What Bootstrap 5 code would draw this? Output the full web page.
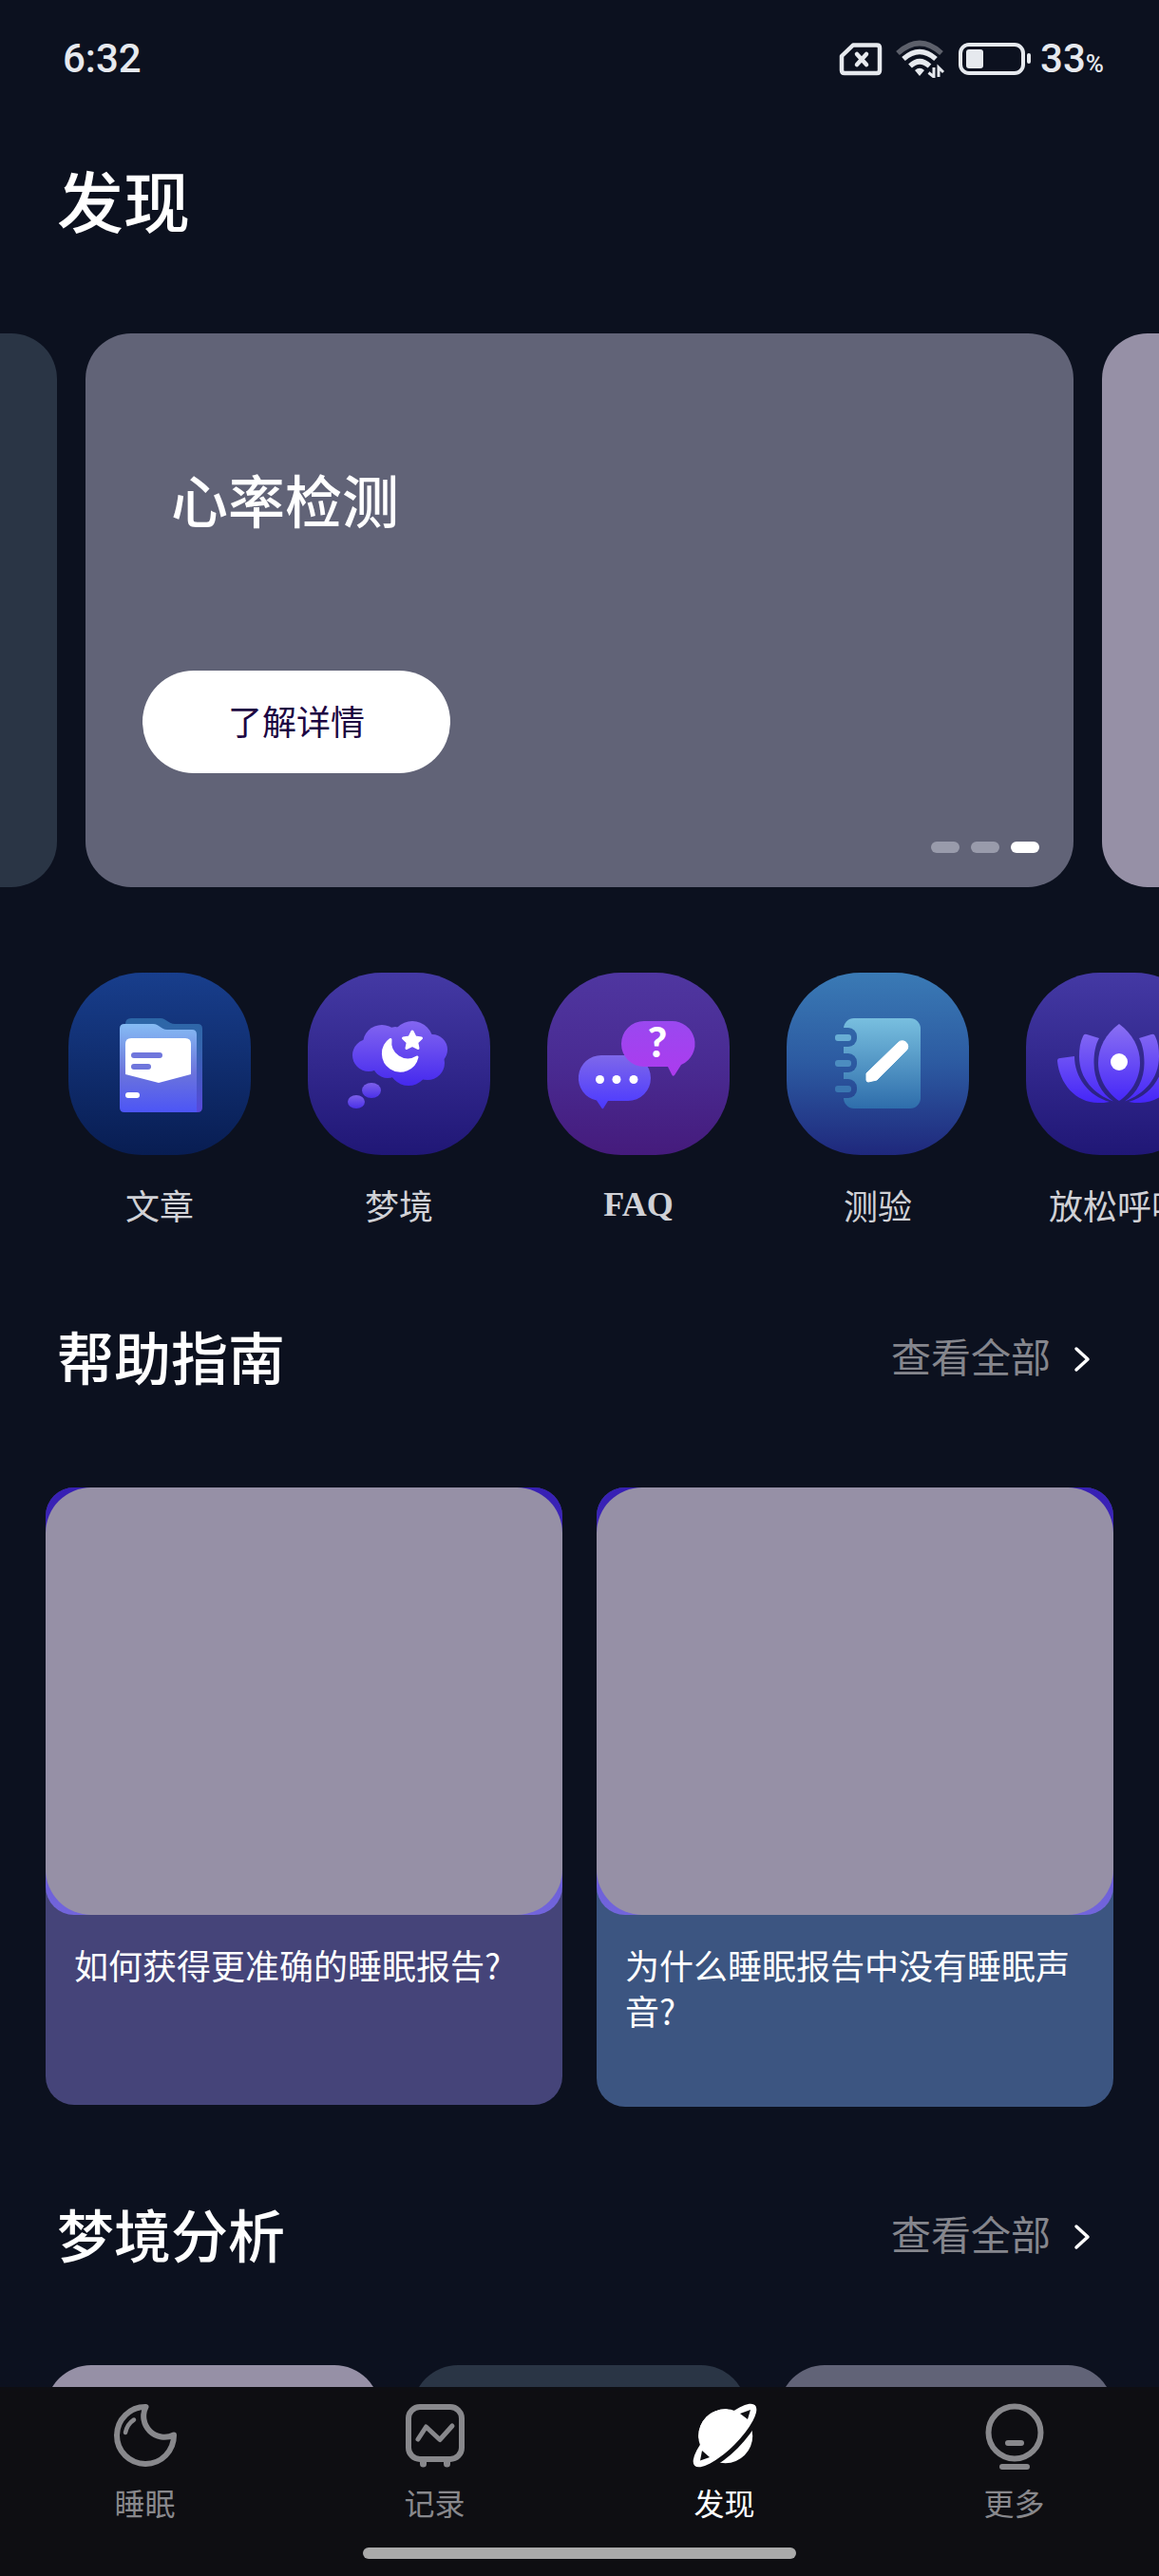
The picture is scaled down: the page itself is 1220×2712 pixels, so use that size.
<!DOCTYPE html>
<html lang="zh-CN" data-bs-theme="dark">
<head>
<meta charset="utf-8">
<meta name="viewport" content="width=device-width, initial-scale=1">
<title>发现</title>
<link href="https://cdn.jsdelivr.net/npm/bootstrap@5.3.0/dist/css/bootstrap.min.css" rel="stylesheet">
<style>
  body { background: #0c111f; color: #fff; font-family: "Noto Sans CJK SC", sans-serif; }
  a { color: inherit; text-decoration: none; }
  svg { display: block; flex: none; }

  .screen-body { scrollbar-width: none; }
  .screen-body::-webkit-scrollbar { display: none; }

  .status-bar { height: 124px; padding: 0 58px 0 66px; color: #e6e9ee; font-family: Roboto, sans-serif; font-weight: 500; }
  .status-time { font-size: 42px; line-height: 48px; }
  .status-icons { gap: 14px; }
  .status-level { font-size: 42px; line-height: 48px; }
  .status-level small { font-size: 26px; line-height: 24px; font-weight: 500; }

  .page-title { font-size: 70px; line-height: 84px; padding: 0 60px; margin: 44px 0 99px; font-weight: 500; }

  .slides { gap: 30px; }
  .slide { width: calc(100% - 180px); height: 583px; border-radius: 48px; }
  .tone-slate { background: #2a3545; }
  .tone-grey { background: #616377; }
  .tone-mauve { background: #9690a6; }
  .slide-current { padding: 132px 36px 36px 60px; }
  .slide-title { font-size: 60px; line-height: 84px; margin-left: 30px; margin-bottom: 139px; font-weight: 500; }
  .slide-btn { width: 324px; height: 108px; padding: 0 0 4px; font-size: 36px; line-height: 48px; --bs-btn-color: #1d0542; --bs-btn-bg: #fff; --bs-btn-border-width: 0; --bs-btn-hover-bg: #eee; --bs-btn-hover-color: #1d0542; }
  .slide-dots { gap: 12px; }
  .slide-dots button { width: 30px; height: 12px; border-radius: 6px; border: 0; padding: 0; background: #999bab; }
  .slide-dots button.active { background: #fff; }

  .topics { gap: 60px; padding: 0 72px 16px; margin-top: 90px; }
  .topic { width: 192px; color: #d0d1d6; font-size: 36px; line-height: 48px; gap: 28px; }
  .topic-tile { border-radius: 78px; }
  .topic-latin { font-family: "Liberation Serif", serif; font-weight: 700; }

  .section-head { padding: 0 72px 0 60px; margin: 91px 0 97px; }
  .topics + section .section-head { margin-top: 77px; }
  .section-head h2 { font-size: 60px; line-height: 84px; font-weight: 500; }
  .section-more { font-size: 42px; line-height: 60px; gap: 24px; color: #85868d; }
  .section-more svg { margin-top: 8px; }

  .guides { gap: 36px; padding: 0 48px; }
  .guide { border-radius: 30px; }
  .guide-cover { border-radius: 30px; background: linear-gradient(#371fb4, #7265dc); }
  .guide-picture { height: 450px; border-radius: 48px; }
  .guide-text { font-size: 36px; line-height: 48px; padding: 28px 30px 78px; min-height: 200px; }
  .guide-violet { background: #454479; }
  .guide-blue { background: #3c5581; }

  .dreams { gap: 34px; padding: 0 48px; }
  .dream { height: 352px; border-radius: 48px; }

  .tab-bar { background: #0e0e12; height: 199px; padding-top: 15px; }
  .tab-link { color: #88888c; font-size: 32px; line-height: 48px; gap: 10px; padding: 0; }
  .tab-link.active { color: #fff; }
  .home-line { width: 456px; height: 12px; border-radius: 6px; background: #aaa; margin-bottom: 18px; }
</style>
<script src="https://cdn.jsdelivr.net/npm/bootstrap@5.3.0/dist/js/bootstrap.bundle.min.js"></script>
</head>
<body class="vh-100 d-flex flex-column overflow-hidden">

<main class="screen-body flex-grow-1 overflow-auto">
  <div class="status-bar d-flex align-items-center justify-content-between">
    <span class="status-time">6:32</span>
    <div class="status-icons d-flex align-items-center">
      <svg width="46" height="38" viewBox="0 0 46 38" fill="none" stroke="#e6e9ee" stroke-width="4.5" stroke-linejoin="round" stroke-linecap="round" aria-hidden="true">
        <path d="M15 4.500H40Q43 4.500 43 7.500V31Q43 34 40 34H6Q3 34 3 31V16Z"/>
        <path d="M19 14L29 25M29 14L19 25"/>
      </svg>
      <svg width="52" height="40" viewBox="0 0 52 40" fill="none" stroke="#e6e9ee" stroke-width="5.500" aria-hidden="true">
        <path d="M2 14Q25 -7 48 14" stroke="#5d606b"/>
        <path d="M8 20Q25 5 42 20"/>
        <path d="M15 27.500Q25 18 35.500 27.500"/>
        <path d="M20 32Q25 27.500 30 32L25 38Z" fill="#e6e9ee" stroke="none"/>
        <path d="M40 29V39L34.500 34.500M45 39V29L50 34" stroke-width="3"/>
      </svg>
      <div class="d-flex align-items-center gap-2">
        <svg width="78" height="36" viewBox="0 0 78 36" aria-hidden="true">
          <rect x="2" y="3" width="66" height="30" rx="9" fill="none" stroke="#e6e9ee" stroke-width="4"/>
          <rect x="8" y="8" width="18" height="20" rx="3" fill="#e6e9ee"/>
          <rect x="72" y="12" width="4" height="11" rx="2" fill="#e6e9ee"/>
        </svg>
        <span class="status-level">33<small>%</small></span>
      </div>
    </div>
  </div>

  <h1 class="page-title">发现</h1>

  <section class="slides d-flex justify-content-center overflow-hidden">
    <div class="slide tone-slate flex-shrink-0"></div>
    <div class="slide slide-current tone-grey flex-shrink-0 d-flex flex-column align-items-start">
      <h2 class="slide-title">心率检测</h2>
      <button type="button" class="slide-btn btn rounded-pill">了解详情</button>
      <div class="slide-dots d-flex mt-auto ms-auto">
        <button type="button" aria-label="1"></button>
        <button type="button" aria-label="2"></button>
        <button type="button" class="active" aria-label="3"></button>
      </div>
    </div>
    <div class="slide tone-mauve flex-shrink-0"></div>
  </section>

  <nav class="topics d-flex overflow-hidden">
    <a href="#" class="topic flex-shrink-0 d-flex flex-column align-items-center">
      <svg class="topic-tile" width="192" height="192" viewBox="0 0 192 192" aria-hidden="true">
        <defs>
          <linearGradient id="tileBlue" x2="0" y2="1"><stop stop-color="#183e8c"/><stop offset="1" stop-color="#081d52"/></linearGradient>
          <linearGradient id="folderBack" x2="0" y2="1"><stop stop-color="#2c66a6"/><stop offset=".3" stop-color="#3566ae"/><stop offset="1" stop-color="#5848dc"/></linearGradient>
          <linearGradient id="folderFront" x2="0" y2="1"><stop stop-color="#86bcf4"/><stop offset=".55" stop-color="#6b74dc"/><stop offset="1" stop-color="#4c55f6"/></linearGradient>
        </defs>
        <rect width="192" height="192" fill="url(#tileBlue)"/>
        <path d="M60 54Q60 48 66 48H97C103 48 105 54 112 54H136Q141 54 141 59V142Q141 147 136 147H60Z" fill="url(#folderBack)"/>
        <path d="M54 59Q54 54 59 54H89C96 54 97 60 104 60H130Q135 60 135 65V147H59Q54 147 54 142Z" fill="url(#folderFront)"/>
        <path d="M60 75Q60 69 66 69H123Q129 69 129 75V107L95 116L60 107Z" fill="#fff"/>
        <rect x="66" y="84" width="33" height="6" rx="3" fill="#6f76dc"/>
        <rect x="66" y="96" width="21" height="6" rx="3" fill="#6f76dc"/>
        <rect x="60" y="126" width="15" height="6" rx="3" fill="#fff"/>
      </svg>
      <span>文章</span>
    </a>
    <a href="#" class="topic flex-shrink-0 d-flex flex-column align-items-center">
      <svg class="topic-tile" width="192" height="192" viewBox="0 0 192 192" aria-hidden="true">
        <defs>
          <linearGradient id="tileIndigo" x2="0" y2="1"><stop stop-color="#4439a4"/><stop offset="1" stop-color="#201776"/></linearGradient>
          <linearGradient id="violetFill" gradientUnits="userSpaceOnUse" x1="0" y1="51" x2="0" y2="120"><stop stop-color="#8366f0"/><stop offset="1" stop-color="#4428ee"/></linearGradient>
          <linearGradient id="puffFill" x2="0" y2="1"><stop stop-color="#7d60ea"/><stop offset="1" stop-color="#4a30e8"/></linearGradient>
        </defs>
        <rect width="192" height="192" fill="url(#tileIndigo)"/>
        <g fill="url(#violetFill)">
          <circle cx="64" cy="87" r="17"/><circle cx="78" cy="75" r="20"/><circle cx="92" cy="67" r="10"/>
          <circle cx="110" cy="73" r="22"/><circle cx="131" cy="81" r="16"/><circle cx="126" cy="95" r="18"/>
          <circle cx="106" cy="98" r="21"/><circle cx="84" cy="95" r="16"/>
        </g>
        <path d="M87 70.500A18 18 0 1 0 115 89A18.500 18.500 0 0 1 87 70.500Z" fill="#fff" stroke="#fff" stroke-width="3" stroke-linejoin="round"/>
        <path d="M110 62L113 68L119.500 69L114.800 73.500L116 79.500L110 76.500L104 79.500L105.200 73.500L100.500 69L107 68Z" fill="#fff" stroke="#fff" stroke-width="3" stroke-linejoin="round"/>
        <ellipse cx="67" cy="124" rx="10" ry="8" fill="url(#puffFill)"/>
        <ellipse cx="51" cy="136" rx="9" ry="7" fill="url(#puffFill)"/>
      </svg>
      <span>梦境</span>
    </a>
    <a href="#" class="topic flex-shrink-0 d-flex flex-column align-items-center">
      <svg class="topic-tile" width="192" height="192" viewBox="0 0 192 192" aria-hidden="true">
        <defs>
          <linearGradient id="tilePurple" x2="0" y2="1"><stop stop-color="#4f36a0"/><stop offset=".5" stop-color="#492b92"/><stop offset="1" stop-color="#451b7c"/></linearGradient>
          <linearGradient id="bubbleBlue" x2="0" y2="1"><stop stop-color="#7e68ea"/><stop offset="1" stop-color="#4b38ff"/></linearGradient>
          <linearGradient id="bubblePink" x2="0" y2="1"><stop stop-color="#9a48f0"/><stop offset="1" stop-color="#ac3bee"/></linearGradient>
        </defs>
        <rect width="192" height="192" fill="url(#tilePurple)"/>
        <path d="M57 87H85A24 24 0 0 1 85 135H64L59 143Q58 144 57 142L52 134.500A24 24 0 0 1 57 87Z" fill="url(#bubbleBlue)"/>
        <path d="M102 51H130A24 24 0 0 1 141 97L134 108Q132 110 131 107L127 99H102A24 24 0 0 1 102 51Z" fill="url(#bubblePink)"/>
        <g fill="#fff"><circle cx="55.500" cy="112.500" r="4.500"/><circle cx="73" cy="112.500" r="4.500"/><circle cx="91" cy="112.500" r="4.500"/></g>
        <text x="116" y="89" text-anchor="middle" font-family="Lato, sans-serif" font-weight="900" font-size="44" fill="#fff">?</text>
      </svg>
      <span class="topic-latin">FAQ</span>
    </a>
    <a href="#" class="topic flex-shrink-0 d-flex flex-column align-items-center">
      <svg class="topic-tile" width="192" height="192" viewBox="0 0 192 192" aria-hidden="true">
        <defs>
          <linearGradient id="tileSea" x2="0" y2="1"><stop stop-color="#3a7ab5"/><stop offset=".5" stop-color="#2c5aa1"/><stop offset="1" stop-color="#1f287c"/></linearGradient>
          <linearGradient id="bookFill" x2="0" y2="1"><stop stop-color="#78bfdf"/><stop offset="1" stop-color="#2e6dab"/></linearGradient>
          <mask id="bookHoles">
            <rect width="192" height="192" fill="#fff"/>
            <g fill="#000"><rect x="40" y="58" width="34" height="20" rx="9"/><rect x="40" y="85" width="34" height="20" rx="9"/><rect x="40" y="112" width="34" height="20" rx="9"/></g>
          </mask>
        </defs>
        <rect width="192" height="192" fill="url(#tileSea)"/>
        <rect x="60" y="48" width="81" height="95" rx="11" fill="url(#bookFill)" mask="url(#bookHoles)"/>
        <rect x="51" y="65" width="17" height="7" rx="3" fill="#68add4"/>
        <rect x="51" y="92" width="17" height="7" rx="3" fill="#4c8dc0"/>
        <rect x="51" y="119" width="17" height="7" rx="3" fill="#3a76b1"/>
        <path d="M117.500 73.500A5.500 5.500 0 0 1 126 82L95 113L86 115Q84 115 84 113V106Z" fill="#fff" stroke="#fff" stroke-linejoin="round"/>
      </svg>
      <span>测验</span>
    </a>
    <a href="#" class="topic flex-shrink-0 d-flex flex-column align-items-center">
      <svg class="topic-tile" width="192" height="192" viewBox="0 0 192 192" aria-hidden="true">
        <defs><linearGradient id="lotusFill" gradientUnits="userSpaceOnUse" x1="0" y1="54" x2="0" y2="137"><stop stop-color="#8a70f2"/><stop offset="1" stop-color="#4526f8"/></linearGradient></defs>
        <rect width="192" height="192" fill="url(#tileIndigo)"/>
        <g fill="url(#lotusFill)">
          <path d="M98 54C112 64 120 79 120 95C120 112 110 127 98 135C86 127 76 112 76 95C76 79 84 64 98 54Z"/>
          <path d="M60 67Q61 64 64 65L77 69C73 76 71.500 85 71.500 95C71.500 112 79 127 92 135.500C72 128 56 112 56 88C56 80 57 73 60 67Z"/>
          <path d="M33 93Q33 90 36 90L51 88C51 110 66 130 88 136C84 137 80 137 76 137C52 137 35 116 33 93Z"/>
          <path d="M136 67Q135 64 132 65L119 69C123 76 124.500 85 124.500 95C124.500 112 117 127 104 135.500C124 128 140 112 140 88C140 80 139 73 136 67Z"/>
          <path d="M163 93Q163 90 160 90L145 88C145 110 130 130 108 136C112 137 116 137 120 137C144 137 161 116 163 93Z"/>
        </g>
        <circle cx="98" cy="94" r="9" fill="#fff"/>
      </svg>
      <span class="text-nowrap">放松呼吸</span>
    </a>
  </nav>

  <section>
    <div class="section-head d-flex align-items-center justify-content-between">
      <h2 class="mb-0">帮助指南</h2>
      <a href="#" class="section-more d-flex align-items-center">查看全部
        <svg width="18" height="28" viewBox="0 0 18 28" fill="none" stroke="#fff" stroke-width="3.500" stroke-linecap="round" stroke-linejoin="round" aria-hidden="true"><path d="M3 3L15 14L3 25"/></svg>
      </a>
    </div>
    <div class="guides d-flex align-items-start">
      <a href="#" class="guide guide-violet w-50">
        <div class="guide-cover"><div class="guide-picture tone-mauve"></div></div>
        <p class="guide-text mb-0">如何获得更准确的睡眠报告?</p>
      </a>
      <a href="#" class="guide guide-blue w-50">
        <div class="guide-cover"><div class="guide-picture tone-mauve"></div></div>
        <p class="guide-text mb-0">为什么睡眠报告中没有睡眠声音?</p>
      </a>
    </div>
  </section>

  <section>
    <div class="section-head d-flex align-items-center justify-content-between">
      <h2 class="mb-0">梦境分析</h2>
      <a href="#" class="section-more d-flex align-items-center">查看全部
        <svg width="18" height="28" viewBox="0 0 18 28" fill="none" stroke="#fff" stroke-width="3.500" stroke-linecap="round" stroke-linejoin="round" aria-hidden="true"><path d="M3 3L15 14L3 25"/></svg>
      </a>
    </div>
    <div class="dreams d-flex">
      <a href="#" class="dream tone-mauve flex-fill" aria-label="梦境分析 1"></a>
      <a href="#" class="dream tone-slate flex-fill" aria-label="梦境分析 2"></a>
      <a href="#" class="dream tone-grey flex-fill" aria-label="梦境分析 3"></a>
    </div>
  </section>
</main>

<footer class="tab-bar flex-shrink-0 d-flex flex-column justify-content-between align-items-center">
  <nav class="nav nav-fill w-100 flex-nowrap">
    <a href="#" class="tab-link nav-link w-25 d-flex flex-column align-items-center">
      <svg width="72" height="72" viewBox="0 0 72 72" fill="none" stroke="currentColor" stroke-width="6" stroke-linecap="round" stroke-linejoin="round" aria-hidden="true">
        <path d="M36.500 6A30 30 0 1 0 66 35.500A22 22 0 0 1 36.500 6Z"/>
        <path d="M15 33Q17 24 24 19.500" stroke-width="4.500"/>
      </svg>
      <span>睡眠</span>
    </a>
    <a href="#" class="tab-link nav-link w-25 d-flex flex-column align-items-center">
      <svg width="72" height="72" viewBox="0 0 72 72" fill="none" stroke="currentColor" stroke-width="6" stroke-linecap="round" stroke-linejoin="round" aria-hidden="true">
        <rect x="8" y="6" width="56" height="55" rx="12"/>
        <path d="M18 40L26.500 27L41 40.500L54 26" stroke-width="5"/>
        <path d="M23.500 63V66M48.500 63V66" stroke-width="7"/>
      </svg>
      <span>记录</span>
    </a>
    <a href="#" class="tab-link nav-link active w-25 d-flex flex-column align-items-center" aria-current="page">
      <svg width="72" height="72" viewBox="0 0 72 72" fill="currentColor" aria-hidden="true">
        <g transform="translate(36 36) rotate(-45)">
          <circle cx="0" cy="1" r="28.500"/>
          <ellipse rx="52" ry="19" fill="#0e0e12"/>
          <ellipse rx="45" ry="14"/>
          <path d="M-28.500 1A28.500 28.500 0 0 1 28.500 1Z"/>
        </g>
        <path d="M52 13L63 9L60 19ZM12 52L10 62.500L20 59Z" fill="#0e0e12"/>
      </svg>
      <span>发现</span>
    </a>
    <a href="#" class="tab-link nav-link w-25 d-flex flex-column align-items-center">
      <svg width="72" height="72" viewBox="0 0 72 72" fill="none" stroke="currentColor" stroke-width="6" stroke-linecap="round" aria-hidden="true">
        <circle cx="36" cy="33" r="27.500"/>
        <path d="M29 44H43M23 69H49"/>
      </svg>
      <span>更多</span>
    </a>
  </nav>
  <div class="home-line"></div>
</footer>
</body>
</html>
